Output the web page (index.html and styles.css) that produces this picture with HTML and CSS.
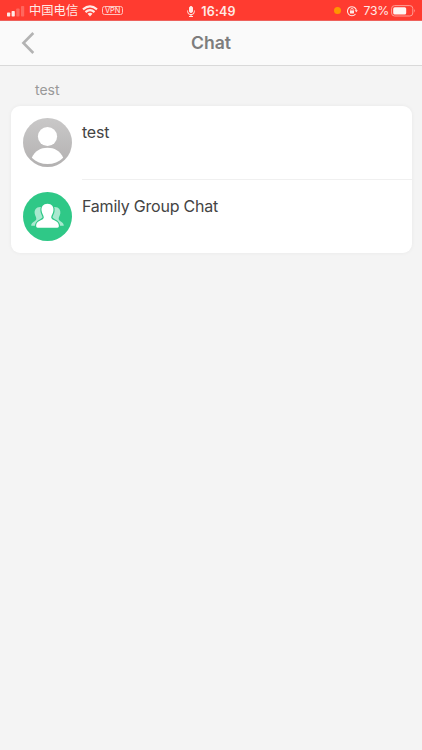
FILE: index.html
```html
<!DOCTYPE html>
<html lang="en">
<head>
<meta charset="utf-8">
<title>Chat</title>
<link rel="stylesheet" href="styles.css">
</head>
<body>
<div class="status">
  <div class="status-left">
    <svg class="signal" width="18" height="12" viewBox="0 0 18 12" fill="#ffe9e5"><rect x="0" y="7.5" width="3.2" height="4" rx=".7"/><rect x="4.6" y="6" width="3.2" height="5.5" rx=".7"/><g opacity=".25"><rect x="9.3" y="3.5" width="3.2" height="8" rx=".7"/><rect x="14" y="1" width="3.2" height="10.5" rx=".7"/></g></svg>
    <span class="carrier">中国电信</span>
    <svg class="wifi" width="16" height="12" viewBox="0 0 16 12" fill="none" stroke="#ffe9e5" stroke-width="2.2"><path d="M1 4.4Q8-1.6 15 4.4M3.5 7.1Q8 3.2 12.5 7.1"/><path d="M5.5 8.8Q8 6.6 10.5 8.8L8 11.4Z" fill="#ffe9e5" stroke="none"/></svg>
    <span class="vpn">VPN</span>
  </div>
  <div class="status-mid">
    <svg class="mic" width="8" height="11" viewBox="0 0 8 11" fill="none" stroke="#ffe9e5"><rect x="2.5" y=".5" width="3" height="6" rx="1.5" fill="#ffe9e5"/><path d="M.6 4.5v1a3.4 3.2 0 0 0 6.8 0v-1M4 8.7v2M2 10.5h4"/></svg>
    <span class="clock">16:49</span>
  </div>
  <div class="status-right">
    <span class="dot"></span>
    <svg class="lock" width="12" height="12" viewBox="0 0 12 12" fill="none" stroke="#ffe9e5" stroke-width="1.1"><path d="M9.5 9A4.5 4.5 0 1 1 10.4 5.5"/><path d="M8.6 5.2h3.2L10.3 7.3Z" fill="#ffe9e5" stroke="none"/><rect x="4" y="5.5" width="4" height="3" rx=".5" fill="#ffe9e5" stroke="none"/><path d="M4.8 5.7V4.6a1.2 1.2 0 0 1 2.4 0v1.1" stroke-width=".8"/></svg>
    <span class="percent">73%</span>
    <svg class="battery" width="25" height="12" viewBox="0 0 25 12"><rect x=".6" y=".6" width="21.2" height="10.4" rx="3" fill="none" stroke="#ff9e96"/><rect x="2.2" y="2.2" width="13" height="7.2" rx="1.5" fill="#fff5f3"/><path d="M23 4q1.8 1.8 0 3.6Z" fill="#ff9e96"/></svg>
  </div>
</div>
<header class="nav">
  <svg class="back" width="14" height="24" viewBox="0 0 14 24" fill="none" stroke="#b3b3b3" stroke-width="2.6"><path d="M12.3 2L2.4 12L12.3 22"/></svg>
  <h1 class="title">Chat</h1>
</header>
<main>
  <h2 class="section">test</h2>
  <div class="card">
    <div class="row">
      <svg class="avatar" viewBox="0 0 49 49"><defs><linearGradient id="gray" x1="0" y1="0" x2="0" y2="1"><stop stop-color="#c9c8c8"/><stop offset="1" stop-color="#b3b1b1"/></linearGradient></defs><circle cx="24.5" cy="24.5" r="24.5" fill="url(#gray)"/><circle cx="24.5" cy="18.5" r="9.6" fill="#fff"/><path d="M8.8 39.7C12 33 17.5 29.8 24.5 29.8S37 33 40.2 39.7C36 43.8 30.5 46 24.5 46S13 43.8 8.8 39.7Z" fill="#fff"/></svg>
      <div class="label">test</div>
    </div>
    <div class="row">
      <svg class="avatar" viewBox="0 0 49 49"><circle cx="24.5" cy="24.5" r="24.5" fill="#2fc887"/><g fill="#a9e9cf"><path d="M17.8 15C13.2 14.6 11.2 18 11.7 21.5C12.1 24.3 13.8 25.5 13.2 27.4C12.4 29.5 8.2 29.8 8.2 33.8H20V15.5Z"/><path d="M31.2 15C35.8 14.6 37.8 18 37.3 21.5C36.9 24.3 35.2 25.5 35.8 27.4C36.6 29.5 40.8 29.8 40.8 33.8H29V15.5Z"/></g><path d="M24.5 11.8C28.8 11.8 30.9 15 30.4 18.8C30.1 21.8 28.2 23.5 28.2 25.5C28.6 29 35.9 27.6 35.9 34Q35.9 35.7 34.4 35.7H14.6Q13.1 35.7 13.1 34C13.1 27.6 20.4 29 20.8 25.5C20.8 23.5 18.9 21.8 18.6 18.8C18.1 15 20.2 11.8 24.5 11.8Z" fill="#fff" stroke="#2fc887" stroke-width="2.4" paint-order="stroke"/></svg>
      <div class="label">Family Group Chat</div>
    </div>
  </div>
</main>
</body>
</html>
```
FILE: styles.css
```css
* { box-sizing: border-box; }
body {
  margin: 0;
  min-height: 750px;
  background: #f4f4f4;
  font-family: Inter, "Liberation Sans", sans-serif;
  color: #444;
}
.status {
  display: grid;
  grid-template-columns: 1fr auto 1fr;
  height: 21px;
  padding: 1px 6px 0 7px;
  background: #ff3b30;
  border-bottom: 1px solid #ee625c;
  color: #ffe9e5;
}
.status-left, .status-mid, .status-right { display: flex; align-items: center; }
.status-mid { padding-top: 1px; }
.status-right { justify-content: flex-end; }
.signal { margin-right: 4px; }
.carrier {
  font: 12.3px/19px "Noto Sans CJK SC", sans-serif;
  margin-right: 4px;
}
.vpn {
  width: 21px;
  height: 9px;
  margin-left: 4px;
  border: 1px solid #ffc3bd;
  border-radius: 2.5px;
  font-size: 7.5px;
  line-height: 7px;
  text-align: center;
}
.mic { margin-right: 6px; }
.clock { font-size: 12.5px; font-weight: 600; letter-spacing: .2px; }
.dot {
  width: 7px;
  height: 7px;
  margin-right: 5px;
  border-radius: 50%;
  background: #ff9500;
}
.percent { margin: 0 2px 0 5px; font-size: 12.2px; letter-spacing: -.2px; }
.nav {
  display: grid;
  grid-template-columns: 40px 1fr 40px;
  align-items: center;
  height: 45px;
  background: #fafafa;
  border-bottom: 1px solid #d9d9d9;
}
.back { margin-left: 21px; }
.title {
  margin: 0;
  color: #7d7d7d;
  font-size: 17.6px;
  line-height: 24px;
  font-weight: 600;
  text-align: center;
}
.section {
  margin: 0;
  padding: 14px 35px 6px;
  color: #999;
  font-size: 14px;
  line-height: 20px;
  font-weight: 400;
}
.card {
  margin: 0 10.5px;
  border-radius: 9px;
  background: #fff;
  box-shadow: 0 0 4px rgba(0, 0, 0, .05);
}
.row { display: flex; height: 73px; padding-left: 12px; }
.row:first-child { height: 74px; }
.avatar { width: 49px; height: 49px; margin: 12px 10.5px 0 0; flex: none; }
.label {
  flex: 1;
  padding-top: 14px;
  font-size: 16px;
  line-height: 24px;
  letter-spacing: -.22px;
}
.row:first-child .label { border-bottom: 1px solid #f0f0f0; }
```
